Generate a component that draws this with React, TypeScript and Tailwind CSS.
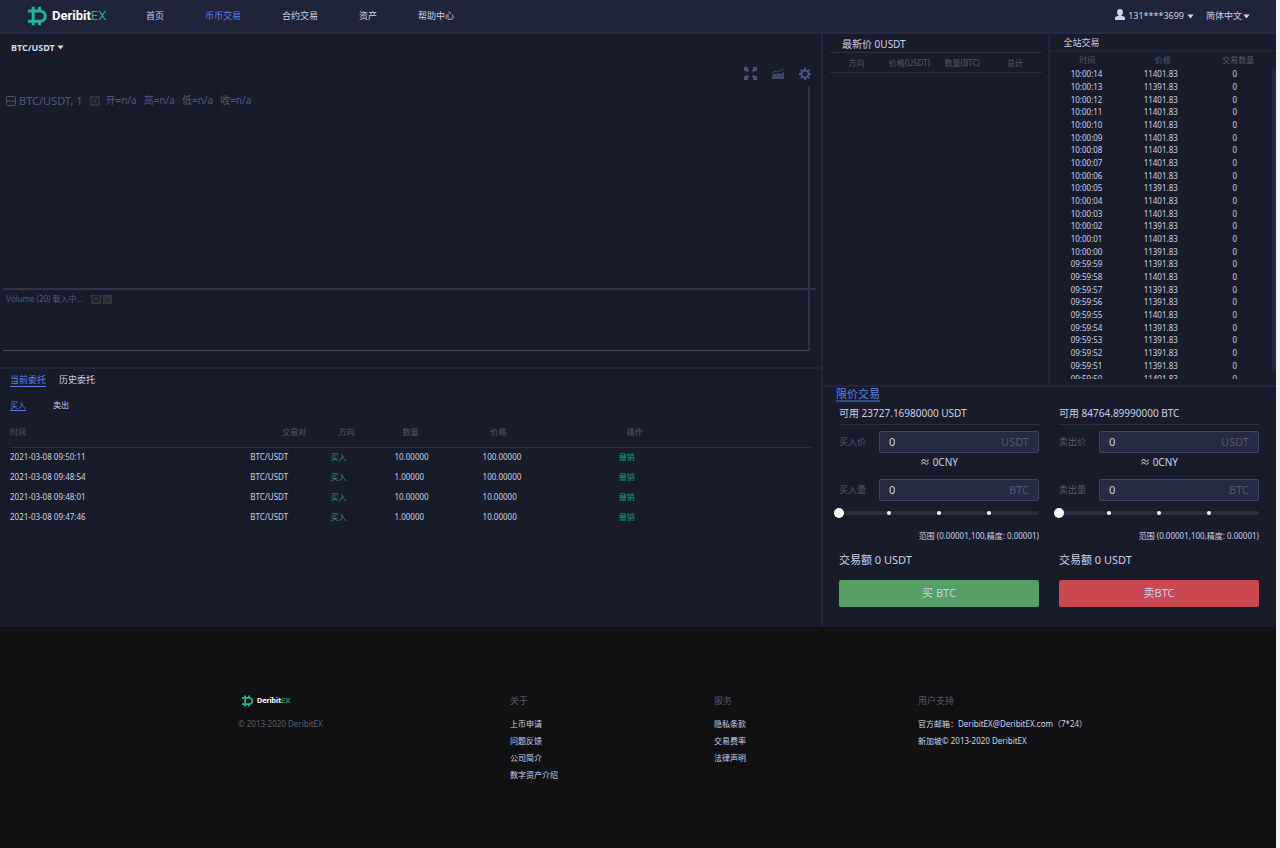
import { useState } from "react";

const navLinks = [
  { label: "首页", href: "#home" },
  { label: "币币交易", href: "#exchange", active: true },
  { label: "合约交易", href: "#contract" },
  { label: "资产", href: "#assets" },
  { label: "帮助中心", href: "#help" },
];

const orders = [
  { time: "2021-03-08 09:50:11", amount: "10.00000", price: "100.00000" },
  { time: "2021-03-08 09:48:54", amount: "1.00000", price: "100.00000" },
  { time: "2021-03-08 09:48:01", amount: "10.00000", price: "10.00000" },
  { time: "2021-03-08 09:47:46", amount: "1.00000", price: "10.00000" },
];

const trades = [
  ["10:00:14", "11401.83"],
  ["10:00:13", "11391.83"],
  ["10:00:12", "11401.83"],
  ["10:00:11", "11401.83"],
  ["10:00:10", "11401.83"],
  ["10:00:09", "11401.83"],
  ["10:00:08", "11401.83"],
  ["10:00:07", "11401.83"],
  ["10:00:06", "11401.83"],
  ["10:00:05", "11391.83"],
  ["10:00:04", "11401.83"],
  ["10:00:03", "11401.83"],
  ["10:00:02", "11391.83"],
  ["10:00:01", "11401.83"],
  ["10:00:00", "11391.83"],
  ["09:59:59", "11391.83"],
  ["09:59:58", "11401.83"],
  ["09:59:57", "11391.83"],
  ["09:59:56", "11391.83"],
  ["09:59:55", "11401.83"],
  ["09:59:54", "11391.83"],
  ["09:59:53", "11391.83"],
  ["09:59:52", "11391.83"],
  ["09:59:51", "11391.83"],
  ["09:59:50", "11401.83"],
];

const footerColumns = [
  { title: "关于", links: ["上币申请", "问题反馈", "公司简介", "数字资产介绍"] },
  { title: "服务", links: ["隐私条款", "交易费率", "法律声明"] },
  {
    title: "用户支持",
    links: [
      "官方邮箱：DeribitEX@DeribitEX.com（7*24）",
      "新加坡© 2013-2020 DeribitEX",
    ],
  },
];

function LogoMark({ className }: { className: string }) {
  return (
    <svg viewBox="0 0 20 20" className={className} fill="none" stroke="#26b094">
      <path
        d="M0 4.9h11.700a5.600 5.200 0 0 1 0 10.400H0M5.200 0.800v18.400"
        strokeWidth="3"
      />
      <path d="M11.500 0.800v4M11.500 15.200v4" strokeWidth="3" />
    </svg>
  );
}

function Caret({ className = "" }: { className?: string }) {
  return (
    <svg viewBox="0 0 7 5" className={`h-[5px] w-[7px] shrink-0 ${className}`}>
      <path d="M0.300 0.500h6.400L3.500 4.500z" fill="currentColor" />
    </svg>
  );
}

function GearIcon({ className }: { className: string }) {
  return (
    <svg viewBox="0 0 12 12" className={className} fill="none" stroke="currentColor">
      <circle cx="6" cy="6" r="3.4" strokeWidth="1.8" />
      <path
        d="M6 0v2M6 10v2M0 6h2M10 6h2M1.8 1.8l1.3 1.3M8.9 8.9l1.3 1.3M10.2 1.8L8.9 3.1M3.1 8.9l-1.3 1.3"
        strokeWidth="2"
      />
    </svg>
  );
}

function Header() {
  return (
    <header className="flex h-[34px] items-center border-b-2 border-[#272a44] bg-[#202438] pl-7 pr-[26px] text-[9px]">
      <a href="#home" className="flex w-[118px] items-center gap-1">
        <LogoMark className="h-5 w-5" />
        <span className="font-['Roboto',sans-serif] text-[13px] font-bold leading-5 text-white">
          Deribit<span className="font-normal text-[#26b094]">EX</span>
        </span>
      </a>
      <nav className="flex gap-[41px]">
        {navLinks.map((link) => (
          <a
            key={link.label}
            href={link.href}
            className={link.active ? "text-[#5f80e8]" : "text-[#cdd1ea]"}
          >
            {link.label}
          </a>
        ))}
      </nav>
      <div className="ml-auto flex items-center gap-3">
        <button className="flex items-center gap-[3px]">
          <svg viewBox="0 0 10 11" className="mb-[3px] h-[11px] w-[10px]" fill="#cdd1ea">
            <ellipse cx="5" cy="3.2" rx="2.9" ry="3.2" />
            <path d="M3.6 5.500h2.800v1.200l2.500.9C9.700 8 10 8.600 10 9.400V11H0V9.400C0 8.600.3 8 1.100 7.600l2.500-.9z" />
          </svg>
          131****3699
          <Caret />
        </button>
        <label className="flex items-center">
          <select aria-label="简体中文" className="appearance-none">
            <option>简体中文</option>
          </select>
          <Caret />
        </label>
      </div>
    </header>
  );
}

function ChartPanel() {
  return (
    <section className="border-b-2 border-[#222539] pb-4 text-[#545980]">
      <label className="flex h-[27px] w-fit items-center gap-[2px] pl-[11px] text-[9px] font-bold text-[#d5d9ee]">
        <select aria-label="BTC/USDT" className="appearance-none">
          <option>BTC/USDT</option>
        </select>
        <Caret />
      </label>

      <div className="flex h-[25px] items-center justify-end gap-[15px] pr-[10px]">
        <button aria-label="全屏">
          <svg viewBox="0 0 13 13" className="h-[13px] w-[13px]" fill="#4a557f">
            <path d="M0 0h4.500L3.200 1.300l2 2-1.900 1.900-2-2L0 4.500zM13 0v4.500l-1.300-1.300-2 2-1.900-1.900 2-2L8.500 0zM0 13V8.500l1.300 1.300 2-2 1.900 1.900-2 2L4.500 13zM13 13H8.500l1.300-1.300-2-2 1.900-1.900 2 2L13 8.500z" />
          </svg>
        </button>
        <button aria-label="指标">
          <svg viewBox="0 0 12 11" className="h-[11px] w-3">
            <path d="M0 11V7l2.500-1.500 2 1L7 5l2 1.200L12 3.500V11z" fill="#404870" />
            <path
              d="M0 5l3-2 1.800 1L7.500 2.200 9 3.200l3-3"
              fill="none"
              stroke="#404870"
              strokeWidth="1"
            />
          </svg>
        </button>
        <button aria-label="设置" className="text-[#4a5a8f]">
          <GearIcon className="h-3 w-3" />
        </button>
      </div>

      <div className="ml-[3px] mr-[11px] h-[202px] border-r-2 border-[#2f3248] pl-[3px] pt-2">
        <div className="flex items-center text-[11px] leading-[13px]">
          <svg viewBox="0 0 10 10" className="mr-[3px] h-[10px] w-[10px]" fill="none" stroke="#55575f">
            <rect x="0.5" y="0.5" width="9" height="9" rx="1" />
            <path d="M1 5h8" />
          </svg>
          BTC/USDT, 1
          <span className="ml-2 mr-[5px] flex h-[10px] w-[10px] items-center justify-center bg-[#30323d] text-[#1d1f2b]">
            <GearIcon className="h-2 w-2" />
          </span>
          <span className="flex gap-[7px] text-[10px]">
            <span>开=n/a</span>
            <span>高=n/a</span>
            <span>低=n/a</span>
            <span>收=n/a</span>
          </span>
        </div>
      </div>
      <div className="ml-[3px] mr-[5px] h-[2px] bg-[#2f3248]" />
      <div className="ml-[3px] mr-[11px] h-[61px] border-b border-r-2 border-b-[#484c6b] border-r-[#2f3248] pl-[3px] pt-1">
        <div className="flex items-center gap-[2px] text-[8px] leading-[10px]">
          <span className="mr-[6px]">Volume (20) 载入中...</span>
          <button
            aria-label="设置"
            className="flex h-[9px] w-[10px] items-center justify-center bg-[#34363f] text-[#191b28]"
          >
            <GearIcon className="h-2 w-2" />
          </button>
          <button
            aria-label="删除"
            className="flex h-[9px] w-[9px] items-center justify-center bg-[#34363f]"
          >
            <svg viewBox="0 0 7 7" className="h-[7px] w-[7px]" stroke="#191b28">
              <path d="M0.500 0.500l6 6M6.500 0.500l-6 6" />
            </svg>
          </button>
        </div>
      </div>
    </section>
  );
}

function OrdersPanel() {
  return (
    <section className="px-[10px] text-[8px]">
      <div className="flex h-[22px] items-center gap-[13px] text-[9px] leading-3">
        <button className="border-b border-[#5f80e8] text-[#5f80e8]">当前委托</button>
        <button>历史委托</button>
      </div>
      <div className="flex h-[27px] items-center gap-[27px] leading-[11px] shadow-[0_0_4px_rgba(0,0,0,0.15)]">
        <button className="border-b border-[#5f80e8] text-[#5f80e8]">买入</button>
        <button>卖出</button>
      </div>
      <table className="w-full table-fixed text-left">
        <colgroup>
          <col className="w-[30%]" />
          <col className="w-[10%]" />
          <col className="w-[8%]" />
          <col className="w-[11%]" />
          <col className="w-[17%]" />
          <col className="w-[24%]" />
        </colgroup>
        <thead>
          <tr className="h-[29px] border-b border-[#2c303e] text-[#565a70] [&>th]:font-normal">
            <th>时间</th>
            <th className="pl-8">交易对</th>
            <th className="pl-2">方向</th>
            <th className="pl-2">数量</th>
            <th className="pl-2">价格</th>
            <th className="pl-2">操作</th>
          </tr>
        </thead>
        <tbody>
          {orders.map((order) => (
            <tr key={order.time} className="h-5">
              <td>{order.time}</td>
              <td>BTC/USDT</td>
              <td className="text-[#3f9a5c]">买入</td>
              <td>{order.amount}</td>
              <td>{order.price}</td>
              <td>
                <button className="text-[#0d9c82]">撤销</button>
              </td>
            </tr>
          ))}
        </tbody>
      </table>
    </section>
  );
}

function OrderBook() {
  return (
    <section className="border-r-2 border-[#222539] pl-[7px] pr-[6px]">
      <h2 className="h-[18px] pl-3 text-[10px] leading-[20px]">最新价 0USDT</h2>
      <table className="w-full text-[8px]">
        <thead>
          <tr className="h-5 border-y border-[#2a2f3e] text-[#565a70] [&>th]:font-normal">
            <th className="w-1/4">方向</th>
            <th className="w-1/4">价格(USDT)</th>
            <th className="w-1/4">数量(BTC)</th>
            <th className="w-1/4">总计</th>
          </tr>
        </thead>
      </table>
    </section>
  );
}

function TradeFeed() {
  return (
    <section className="pb-[6px]">
      <h2 className="h-[18px] border-b-2 border-[#202335] pl-[14px] text-[9px] leading-[17px]">
        全站交易
      </h2>
      <div className="grid h-4 grid-cols-3 text-center text-[8px] leading-4 text-[#565a70]">
        <span>时间</span>
        <span>价格</span>
        <span>交易数量</span>
      </div>
      <div className="flex h-[311px] items-start overflow-hidden">
        <div className="min-w-0 flex-1">
          <table className="h-[317px] w-full table-fixed text-center text-[8px] leading-3">
            <tbody>
              {trades.map(([time, price]) => (
                <tr key={time}>
                  <td>{time}</td>
                  <td>{price}</td>
                  <td>0</td>
                </tr>
              ))}
            </tbody>
          </table>
        </div>
        <div className="h-[304px] w-1 rounded-sm bg-[#23263a]" />
      </div>
    </section>
  );
}

type TradeFormProps = {
  id: string;
  available: string;
  priceLabel: string;
  amountLabel: string;
  action: string;
  buy?: boolean;
};

function Field({ id, label, unit }: { id: string; label: string; unit: string }) {
  const [value, setValue] = useState("0");

  return (
    <div className="flex items-center">
      <label htmlFor={id} className="w-10 shrink-0 text-[9px] text-[#565a70]">
        {label}
      </label>
      <div className="flex h-[22px] min-w-0 flex-1 items-center rounded-xs border border-[#3a4566] bg-[#262a43] px-[9px] text-[11px]">
        <input
          id={id}
          value={value}
          onChange={(e) => setValue(e.target.value)}
          className="min-w-0 flex-1 bg-transparent outline-none"
        />
        <span className="text-[#535976]">{unit}</span>
      </div>
    </div>
  );
}

function TradeForm({ id, available, priceLabel, amountLabel, action, buy }: TradeFormProps) {
  const [percent, setPercent] = useState(0);

  return (
    <form onSubmit={(e) => e.preventDefault()}>
      <p className="h-[22px] border-b border-[#2a2f3e] text-[10px] leading-5">
        可用 {available}
      </p>
      <div className="pt-[6px]">
        <Field id={`${id}-price`} label={priceLabel} unit="USDT" />
      </div>
      <p className="h-[26px] text-center text-[10px] leading-[19px]">≈ 0CNY</p>
      <Field id={`${id}-amount`} label={amountLabel} unit="BTC" />
      <div className="relative my-[6px] flex h-3 items-center">
        <div className="w-full rounded-full bg-[#2a2d3f]">
          <div className="mx-auto grid w-3/4 grid-cols-3 justify-items-center">
            <span className="h-1 w-1 rounded-full bg-white" />
            <span className="h-1 w-1 rounded-full bg-white" />
            <span className="h-1 w-1 rounded-full bg-white" />
          </div>
        </div>
        <input
          type="range"
          aria-label={amountLabel}
          value={percent}
          onChange={(e) => setPercent(Number(e.target.value))}
          className="absolute -inset-x-[5px] h-3 appearance-none bg-transparent [&::-webkit-slider-thumb]:h-[10px] [&::-webkit-slider-thumb]:w-[10px] [&::-webkit-slider-thumb]:appearance-none [&::-webkit-slider-thumb]:rounded-full [&::-webkit-slider-thumb]:bg-white"
        />
      </div>
      <p className="pt-[5px] text-right text-[8px] leading-3">
        范围 (0.00001,100,精度: 0.00001)
      </p>
      <p className="pt-[10px] text-[11px] leading-4">交易额 0 USDT</p>
      <button
        className={`mt-3 h-[27px] w-full rounded-xs text-[11px] ${
          buy ? "bg-[#56a068]" : "bg-[#cc4850]"
        }`}
      >
        {action}
      </button>
    </form>
  );
}

function TradePanel() {
  return (
    <section className="border-t-2 border-[#222539] pb-5 pl-4 pr-[17px]">
      <h2 className="-ml-[3px] flex h-4 items-start">
        <button className="border-b-2 border-[#35477f] text-[11px] leading-[13px] text-[#5f80e8]">
          限价交易
        </button>
      </h2>
      <div className="grid grid-cols-2 gap-5">
        <TradeForm
          id="buy"
          available="23727.16980000 USDT"
          priceLabel="买入价"
          amountLabel="买入量"
          action="买 BTC"
          buy
        />
        <TradeForm
          id="sell"
          available="84764.89990000 BTC"
          priceLabel="卖出价"
          amountLabel="卖出量"
          action="卖BTC"
        />
      </div>
    </section>
  );
}

function Footer() {
  return (
    <footer className="flex-1 bg-[#111113] pt-[66px]">
      <div className="mx-auto grid max-w-[800px] grid-cols-[34fr_minmax(0,25.5fr)_minmax(0,25.5fr)_minmax(0,15fr)] whitespace-nowrap text-[8px]">
        <div>
          <a href="#home" className="flex h-4 items-center gap-[3px] pl-1">
            <LogoMark className="h-3 w-3" />
            <span className="font-['Roboto',sans-serif] text-[8px] font-bold text-white">
              Deribit<span className="font-normal text-[#26b094]">EX</span>
            </span>
          </a>
          <p className="pt-[6px] leading-[17px] text-[#5b5d6a]">© 2013-2020 DeribitEX</p>
        </div>
        {footerColumns.map((column) => (
          <div key={column.title}>
            <h3 className="mb-[6px] text-[9px] leading-4 text-[#555868]">{column.title}</h3>
            <ul>
              {column.links.map((link) => (
                <li key={link} className="leading-[17px]">
                  <a href="#footer">{link}</a>
                </li>
              ))}
            </ul>
          </div>
        ))}
      </div>
    </footer>
  );
}

export default function App() {
  return (
    <div className="bg-[#f1f1f1] pr-1">
      <div className="flex min-h-screen flex-col bg-[#181b2a] font-['Noto_Sans','Noto_Sans_CJK_SC',sans-serif] text-[#cdd1ea]">
        <Header />
        <main className="grid grid-cols-[minmax(0,821fr)_minmax(0,455fr)]">
          <div>
            <ChartPanel />
            <OrdersPanel />
          </div>
          <div className="border-l-2 border-[#222539]">
            <div className="grid grid-cols-2">
              <OrderBook />
              <TradeFeed />
            </div>
            <TradePanel />
          </div>
        </main>
        <Footer />
      </div>
    </div>
  );
}
